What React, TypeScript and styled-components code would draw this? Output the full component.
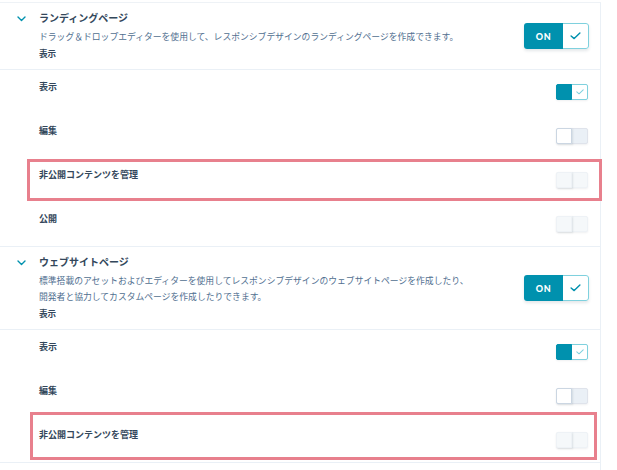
import styled, { createGlobalStyle } from "styled-components";

const GlobalStyle = createGlobalStyle`
  html, body {
    margin: 0;
    padding: 0;
    background: #ffffff;
  }
  body {
    font-family: "Noto Sans CJK JP", "Noto Sans", sans-serif;
    color: #33475b;
  }
`;

type SwitchState = "on" | "off" | "disabled";

type Perm = {
  label: string;
  state: SwitchState;
  box?: { top: number; right: number; bottom: number; left: number };
};

type Section = {
  title: string;
  desc: string[];
  perms: Perm[];
};

const sections: Section[] = [
  {
    title: "ランディングページ",
    desc: [
      "ドラッグ＆ドロップエディターを使用して、レスポンシブデザインのランディングページを作成できます。",
    ],
    perms: [
      { label: "表示", state: "on" },
      { label: "編集", state: "off" },
      {
        label: "非公開コンテンツを管理",
        state: "disabled",
        box: { top: 1, right: -2, bottom: 1, left: 27 },
      },
      { label: "公開", state: "disabled" },
    ],
  },
  {
    title: "ウェブサイトページ",
    desc: [
      "標準搭載のアセットおよびエディターを使用してレスポンシブデザインのウェブサイトページを作成したり、",
      "開発者と協力してカスタムページを作成したりできます。",
    ],
    perms: [
      { label: "表示", state: "on" },
      { label: "編集", state: "off" },
      {
        label: "非公開コンテンツを管理",
        state: "disabled",
        box: { top: -6, right: 3, bottom: 2, left: 30 },
      },
    ],
  },
];

const Check = ({ size, color }: { size: number; color: string }) => (
  <svg width={size} height={size * 0.7} viewBox="0 0 10 7" fill="none">
    <polyline
      points="1,3.6 3.8,6 9,1"
      stroke={color}
      strokeWidth="1.3"
      strokeLinecap="round"
      strokeLinejoin="round"
    />
  </svg>
);

const Chevron = () => (
  <svg width="9" height="6" viewBox="0 0 9 6" fill="none">
    <polyline
      points="1,1 4.5,4.5 8,1"
      stroke="#0091ae"
      strokeWidth="1.4"
      strokeLinecap="round"
      strokeLinejoin="round"
    />
  </svg>
);

const App = () => {
  return (
    <>
      <GlobalStyle />
      <Page>
        <Panel>
          {sections.map((s) => (
            <SectionBlock key={s.title}>
              <Header>
                <ChevronCell>
                  <Chevron />
                </ChevronCell>
                <HeaderText>
                  <Title>{s.title}</Title>
                  <Desc>
                    {s.desc.map((line) => (
                      <div key={line}>{line}</div>
                    ))}
                  </Desc>
                  <SubLabel>表示</SubLabel>
                </HeaderText>
                <BigToggle>
                  <OnPart>ON</OnPart>
                  <CheckPart>
                    <Check size={11} color="#0091ae" />
                  </CheckPart>
                </BigToggle>
              </Header>
              {s.perms.map((p) => (
                <PermRow key={p.label} $box={p.box}>
                  <PermLabel>{p.label}</PermLabel>
                  <Track $state={p.state}>
                    <Knob $state={p.state} />
                    <Side $state={p.state}>
                      {p.state === "on" && <Check size={8} color="#7fd1de" />}
                    </Side>
                  </Track>
                </PermRow>
              ))}
            </SectionBlock>
          ))}
        </Panel>
      </Page>
    </>
  );
};

export default App;

const Page = styled.div`
  display: flex;
  padding-top: 2px;
  min-height: 468px;
`;

const Panel = styled.div`
  width: 600px;
  border-top: 1px solid #eef2f6;
  border-right: 1px solid #eaf0f6;
`;

const SectionBlock = styled.section`
  border-bottom: 1px solid #eaf0f6;
`;

const Header = styled.div`
  display: flex;
  align-items: flex-start;
  padding: 8px 11px 8px 17px;
  border-bottom: 1px solid #eaf0f6;
`;

const ChevronCell = styled.div`
  width: 22px;
  height: 15px;
  display: flex;
  align-items: center;
`;

const HeaderText = styled.div`
  flex: 1;
  display: flex;
  flex-direction: column;
`;

const Title = styled.div`
  font-size: 10px;
  line-height: 14px;
  font-weight: 700;
  color: #33475b;
`;

const Desc = styled.div`
  margin-top: 4px;
  font-size: 8.8px;
  line-height: 16px;
  color: #516f90;
`;

const SubLabel = styled.div`
  font-size: 8.6px;
  line-height: 16px;
  font-weight: 700;
  color: #33475b;
`;

const BigToggle = styled.div`
  align-self: center;
  display: flex;
  width: 65px;
  height: 26px;
  border-radius: 3px;
  overflow: hidden;
  box-shadow: 0 2px 3px rgba(45, 62, 80, 0.12);
`;

const OnPart = styled.div`
  width: 39px;
  display: flex;
  align-items: center;
  justify-content: center;
  background: #0091ae;
  color: #ffffff;
  font-family: "Lato", "Liberation Sans", sans-serif;
  font-weight: 900;
  font-size: 9px;
  letter-spacing: 0.6px;
`;

const CheckPart = styled.div`
  flex: 1;
  display: flex;
  align-items: center;
  justify-content: center;
  background: #ffffff;
  border: 1px solid #7fd1de;
  border-left: none;
  border-radius: 0 3px 3px 0;
`;

const PermRow = styled.div<{
  $box?: { top: number; right: number; bottom: number; left: number };
}>`
  position: relative;
  height: 44px;
  box-sizing: border-box;
  display: flex;
  align-items: flex-start;
  justify-content: space-between;
  padding: 11px 12px 0 39px;

  ${({ $box }) =>
    $box &&
    `
    &::after {
      content: "";
      position: absolute;
      top: ${$box.top}px;
      right: ${$box.right}px;
      bottom: ${$box.bottom}px;
      left: ${$box.left}px;
      border: 3px solid #e8808d;
      pointer-events: none;
    }
  `}
`;

const PermLabel = styled.div`
  font-size: 9px;
  line-height: 12px;
  font-weight: 700;
  color: #33475b;
`;

const Track = styled.div<{ $state: SwitchState }>`
  margin-top: 3px;
  display: flex;
  width: 32px;
  height: 16px;
  border-radius: 2px;
  box-sizing: border-box;
  background: ${({ $state }) =>
    $state === "on" ? "#ffffff" : $state === "off" ? "#eaf0f6" : "#f5f8fa"};
  border: 1px solid
    ${({ $state }) =>
      $state === "on" ? "#7fd1de" : $state === "off" ? "#dfe3eb" : "#eef2f6"};
  box-shadow: 0 1px 2px rgba(45, 62, 80, 0.08);
`;

const Knob = styled.div<{ $state: SwitchState }>`
  width: 16px;
  margin: -1px 0 -1px -1px;
  border-radius: 2px 0 0 2px;
  background: ${({ $state }) =>
    $state === "on" ? "#0091ae" : $state === "off" ? "#ffffff" : "#f5f8fa"};
  border: 1px solid
    ${({ $state }) =>
      $state === "on" ? "#0091ae" : $state === "off" ? "#cbd6e2" : "#eef2f6"};
  box-sizing: border-box;
  box-shadow: ${({ $state }) =>
    $state === "on" ? "none" : "1px 1px 2px rgba(45, 62, 80, 0.12)"};
`;

const Side = styled.div<{ $state: SwitchState }>`
  flex: 1;
  display: flex;
  align-items: center;
  justify-content: center;
`;
